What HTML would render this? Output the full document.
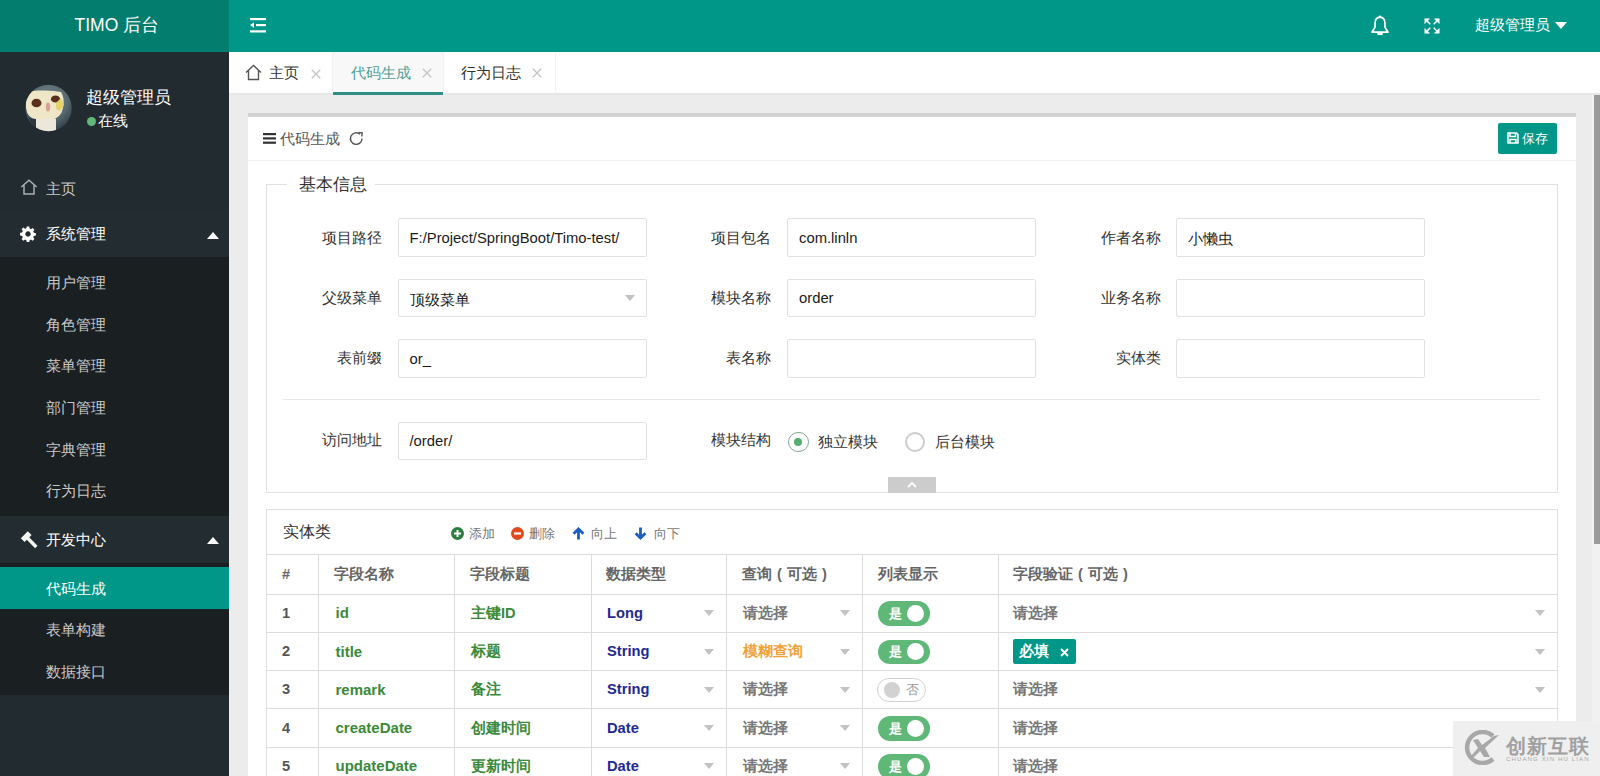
<!DOCTYPE html>
<html><head><meta charset="utf-8">
<style>
*{margin:0;padding:0;box-sizing:border-box}
html,body{width:1600px;height:776px;overflow:hidden;background:#ececec;font-family:"Liberation Sans",sans-serif;color:#333}
.a{position:absolute}
.t{position:absolute;white-space:nowrap;line-height:1}
/* header */
#logo{left:0;top:0;width:229px;height:52px;background:#037d6e}
#topbar{left:229px;top:0;width:1371px;height:52px;background:#009688}
/* sidebar */
#side{left:0;top:52px;width:229px;height:724px;background:#222b30}
.row{position:absolute;left:0;width:229px}
.sub{background:#1a1f22}
.mi{position:absolute;left:46px;font-size:15px;color:#c8c8c8;white-space:nowrap;line-height:1}
/* tabs */
#tabs{left:229px;top:52px;width:1371px;height:42px;background:#fff}
/* card */
#card{left:248px;top:113px;width:1328px;height:700px;background:#fff;border-top:4px solid #d2d2d2}
.lbl{position:absolute;margin-top:-1px;font-size:15px;color:#333;white-space:nowrap;line-height:1;text-align:right}
.inp{position:absolute;width:249px;height:38.5px;border:1px solid #e2e2e2;background:#fff;border-radius:2px}
.inp span{position:absolute;left:11px;top:11.5px;font-size:14.8px;color:#1a1a1a;white-space:nowrap;line-height:1}
.caret{position:absolute;width:0;height:0;border-left:5.5px solid transparent;border-right:5.5px solid transparent;border-top:6px solid #c2c2c2}
.vl{position:absolute;top:554px;width:1px;height:230px;background:#dcdcdc}
.hl{position:absolute;left:266px;width:1292px;height:1px;background:#dcdcdc}
.cell{position:absolute;font-size:14.6px;font-weight:bold;white-space:nowrap;line-height:1}
.g{color:#3a8a3a}
.b{color:#1f2a90}
.gr{color:#777}
.sw{position:absolute;left:877.5px;width:52px;height:24.5px;border-radius:12.25px;background:#5fb878}
.sw i{position:absolute;right:5.5px;top:3.75px;width:17px;height:17px;border-radius:50%;background:#fff}
.sw b{position:absolute;left:11px;top:5.5px;font-size:13px;color:#fff;font-weight:bold;line-height:1}
</style></head><body>
<!-- HEADER -->
<div id="logo" class="a"></div>
<div class="t" style="left:74.5px;top:17px;font-size:17.5px;color:#fff">TIMO 后台</div>
<div id="topbar" class="a"></div>
<svg class="a" style="left:249px;top:17px" width="18" height="17" viewBox="0 0 18 17">
 <rect x="1" y="1" width="16" height="2.2" fill="#fff"/>
 <rect x="7" y="7" width="10" height="2.2" fill="#fff"/>
 <rect x="1" y="13.3" width="16" height="2.2" fill="#fff"/>
 <path d="M1 8.1 L5 5.3 L5 10.9Z" fill="#fff"/>
</svg>
<!-- bell -->
<svg class="a" style="left:1370px;top:14px" width="20" height="22" viewBox="0 0 20 22">
 <path d="M10 3.2 C6.2 3.4 5 6.5 5 9.5 L5 13.2 L2 18.2 L18 18.2 L15 13.2 L15 9.5 C15 6.5 13.8 3.4 10 3.2Z" fill="none" stroke="#fff" stroke-width="1.7" stroke-linejoin="round"/>
 <circle cx="10" cy="2.6" r="1.2" fill="#fff"/>
 <rect x="7.2" y="18.5" width="5.6" height="2.6" rx="1" fill="#fff"/>
</svg>
<!-- fullscreen -->
<svg class="a" style="left:1424px;top:18px" width="16" height="16" viewBox="0 0 16 16" fill="#fff" stroke="#fff" stroke-width="1.5">
 <path d="M2 2 L6.3 6.3 M14 2 L9.7 6.3 M2 14 L6.3 9.7 M14 14 L9.7 9.7" fill="none"/>
 <path d="M0.8 0.8 L5.5 0.8 L0.8 5.5Z M15.2 0.8 L10.5 0.8 L15.2 5.5Z M0.8 15.2 L5.5 15.2 L0.8 10.5Z M15.2 15.2 L10.5 15.2 L15.2 10.5Z" stroke-width="0.6"/>
</svg>
<div class="t" style="left:1475px;top:17px;font-size:15px;color:#fff">超级管理员</div>
<div class="caret" style="left:1554.5px;top:22px;border-top-color:#fff;border-left-width:6.3px;border-right-width:6.3px;border-top-width:7px"></div>

<!-- SIDEBAR -->
<div id="side" class="a"></div>
<!-- avatar -->
<svg class="a" style="left:25px;top:82px" width="47" height="52" viewBox="0 0 47 52">
 <defs><radialGradient id="av" cx="0.5" cy="0.35" r="0.6"><stop offset="0" stop-color="#7d8d94"/><stop offset="0.7" stop-color="#56676f"/><stop offset="1" stop-color="#3a4850"/></radialGradient>
 <clipPath id="avc"><circle cx="23.5" cy="26" r="23.2"/></clipPath></defs>
 <circle cx="23.5" cy="26" r="23.2" fill="url(#av)"/>
 <g clip-path="url(#avc)">
 <path d="M1 15 Q3 8 14 8.5 Q28 8 36 10 Q40 16 38 26 Q36 36 26 38 L12 38 Q2 36 1 26Z" fill="#efe6c8"/>
 <rect x="11" y="37" width="20" height="14" fill="#ece7dc"/>
 <ellipse cx="11.5" cy="21" rx="5" ry="4.3" fill="#5b2f1d"/>
 <ellipse cx="30.5" cy="17" rx="4.6" ry="3.6" fill="#5b2f1d"/>
 <ellipse cx="23" cy="25" rx="2.2" ry="4.5" fill="#d9a095"/>
 <path d="M31 21 L36 16 L39 23 L35 29 L31 27Z" fill="#e6d26a"/>
 <path d="M4 36 Q7 44 11 45 L11 37Z" fill="#2d383e"/>
 </g>
</svg>
<div class="t" style="left:86px;top:89px;font-size:17px;color:#fff">超级管理员</div>
<div class="a" style="left:87px;top:116.5px;width:9px;height:9px;border-radius:50%;background:#5fb878"></div>
<div class="t" style="left:98px;top:113px;font-size:15px;color:#fff">在线</div>

<!-- menu -->
<svg class="a" style="left:20px;top:179px" width="18" height="17" viewBox="0 0 18 17" fill="none" stroke="#a8b0b3" stroke-width="1.5"><path d="M1.3 8 L9 1.2 L16.7 8 M4 6.2 L4 15 L14 15 L14 6.2"/></svg>
<div class="mi" style="top:181px">主页</div>

<div class="row" style="top:210px;height:47px;background:#232c31"></div>
<svg class="a" style="left:20px;top:226px" width="16" height="16" viewBox="0 0 16 16"><path fill="#fff" fill-rule="evenodd" d="M6.8 0.5h2.4l0.4 2.1 1.3 0.6 1.8-1.2 1.7 1.7-1.2 1.8 0.6 1.3 2.1 0.4v2.4l-2.1 0.4-0.6 1.3 1.2 1.8-1.7 1.7-1.8-1.2-1.3 0.6-0.4 2.1H6.8l-0.4-2.1-1.3-0.6-1.8 1.2-1.7-1.7 1.2-1.8-0.6-1.3-2.1-0.4V6.8l2.1-0.4 0.6-1.3-1.2-1.8 1.7-1.7 1.8 1.2 1.3-0.6z M8 5.3a2.7 2.7 0 1 0 0.01 0z"/></svg>
<div class="mi" style="top:226px;color:#fff">系统管理</div>
<div class="caret" style="left:207px;top:231.5px;border-top:0;border-bottom:7px solid #fff;border-left-width:6.5px;border-right-width:6.5px"></div>

<div class="row sub" style="top:257px;height:259px"></div>
<div class="mi" style="top:275px">用户管理</div>
<div class="mi" style="top:317px">角色管理</div>
<div class="mi" style="top:358px">菜单管理</div>
<div class="mi" style="top:400px">部门管理</div>
<div class="mi" style="top:442px">字典管理</div>
<div class="mi" style="top:483px">行为日志</div>

<div class="row" style="top:516px;height:47px;background:#232c31"></div>
<svg class="a" style="left:20px;top:530px" width="18" height="19" viewBox="0 0 18 19"><path fill="#f4f4f0" d="M0.8 8.3 L7.8 1.3 L11.6 5.1 L4.6 12.1Z"/><path d="M7.5 8 L16.3 17" stroke="#f4f4f0" stroke-width="3.4"/></svg>
<div class="mi" style="top:532px;color:#fff">开发中心</div>
<div class="caret" style="left:207px;top:537px;border-top:0;border-bottom:7px solid #fff;border-left-width:6.5px;border-right-width:6.5px"></div>

<div class="row sub" style="top:563px;height:132px"></div>
<div class="row" style="top:566.5px;height:42px;background:#009688"></div>
<div class="mi" style="top:581px;color:#fff">代码生成</div>
<div class="mi" style="top:622px">表单构建</div>
<div class="mi" style="top:664px">数据接口</div>

<!-- TABS -->
<div id="tabs" class="a"></div>
<div class="a" style="left:229px;top:93px;width:1371px;height:2px;background:#e6e6e6"></div>
<div class="a" style="left:333px;top:52px;width:110px;height:42px;background:#f8f8f8"></div>
<div class="a" style="left:333px;top:91.5px;width:110px;height:3px;background:#2f8f87"></div>
<div class="a" style="left:332px;top:52px;width:1px;height:42px;background:#f2f2f2"></div>
<div class="a" style="left:443px;top:52px;width:1px;height:42px;background:#f2f2f2"></div>
<div class="a" style="left:555px;top:52px;width:1px;height:42px;background:#f2f2f2"></div>
<svg class="a" style="left:245px;top:64px" width="17" height="17" viewBox="0 0 17 17" fill="none" stroke="#555" stroke-width="1.4"><path d="M1 8.5 L8.5 1.5 L16 8.5 M3.5 6.5 L3.5 15.5 L13.5 15.5 L13.5 6.5"/></svg>
<div class="t" style="left:269px;top:65px;font-size:15px;color:#333">主页</div>
<svg class="a" style="left:311px;top:68.5px" width="10" height="10" viewBox="0 0 10 10" stroke="#c4c4c4" stroke-width="1.3"><path d="M0.8 0.8 L9.2 9.2 M9.2 0.8 L0.8 9.2"/></svg>
<div class="t" style="left:351px;top:65px;font-size:15px;color:#50a096">代码生成</div>
<svg class="a" style="left:422px;top:68px" width="10" height="10" viewBox="0 0 10 10" stroke="#c4c4c4" stroke-width="1.3"><path d="M0.8 0.8 L9.2 9.2 M9.2 0.8 L0.8 9.2"/></svg>
<div class="t" style="left:461px;top:65px;font-size:15px;color:#333">行为日志</div>
<svg class="a" style="left:532px;top:68px" width="10" height="10" viewBox="0 0 10 10" stroke="#c4c4c4" stroke-width="1.3"><path d="M0.8 0.8 L9.2 9.2 M9.2 0.8 L0.8 9.2"/></svg>

<!-- CARD -->
<div id="card" class="a"></div>
<div class="a" style="left:248px;top:159.5px;width:1328px;height:1px;background:#f0f0f0"></div>
<svg class="a" style="left:263px;top:133px" width="13" height="11" viewBox="0 0 13 11" fill="#333"><rect y="0" width="13" height="2.2"/><rect y="4.3" width="13" height="2.2"/><rect y="8.6" width="13" height="2.2"/></svg>
<div class="t" style="left:280px;top:130.5px;font-size:15px;color:#555">代码生成</div>
<svg class="a" style="left:348px;top:130px" width="17" height="17" viewBox="0 0 17 17" fill="none" stroke="#555" stroke-width="1.4"><path d="M14 8.5 A5.8 5.8 0 1 1 12 4.2"/><path d="M10.5 2.5 L14.2 2.8 L13.8 6.5" /></svg>
<div class="a" style="left:1498px;top:123px;width:59px;height:31px;background:#009688;border-radius:2px"></div>
<svg class="a" style="left:1507px;top:132px" width="12" height="12" viewBox="0 0 12 12" fill="none" stroke="#fff" stroke-width="1.5"><path d="M1 1 H9.5 L11 2.5 V11 H1Z M3 1 V4.5 H8.5 V1 M3 11 V7.5 H9 V11"/></svg>
<div class="t" style="left:1522px;top:132.5px;font-size:12.5px;color:#fff">保存</div>

<!-- fieldset -->
<div class="a" style="left:266px;top:184px;width:1292px;height:309px;border:1px solid #e2e2e2"></div>
<div class="a" style="left:287px;top:180px;width:88px;height:8px;background:#fff"></div>
<div class="t" style="left:299px;top:176.5px;font-size:16.8px;color:#333">基本信息</div>

<div class="lbl" style="left:322px;top:230.5px">项目路径</div>
<div class="inp" style="left:397.5px;top:218px"><span>F:/Project/SpringBoot/Timo-test/</span></div>
<div class="lbl" style="left:711px;top:230.5px">项目包名</div>
<div class="inp" style="left:787px;top:218px"><span>com.linln</span></div>
<div class="lbl" style="left:1101px;top:230.5px">作者名称</div>
<div class="inp" style="left:1176px;top:218px"><span style="top:12px;font-size:15px">小懒虫</span></div>

<div class="lbl" style="left:322px;top:291px">父级菜单</div>
<div class="inp" style="left:397.5px;top:278.5px"><span style="font-size:15px;top:12px">顶级菜单</span></div>
<div class="caret" style="left:625px;top:295px"></div>
<div class="lbl" style="left:711px;top:291px">模块名称</div>
<div class="inp" style="left:787px;top:278.5px"><span>order</span></div>
<div class="lbl" style="left:1101px;top:291px">业务名称</div>
<div class="inp" style="left:1176px;top:278.5px"></div>

<div class="lbl" style="left:337px;top:351px">表前缀</div>
<div class="inp" style="left:397.5px;top:339px"><span>or_</span></div>
<div class="lbl" style="left:726px;top:351px">表名称</div>
<div class="inp" style="left:787px;top:339px"></div>
<div class="lbl" style="left:1116px;top:351px">实体类</div>
<div class="inp" style="left:1176px;top:339px"></div>

<div class="a" style="left:283px;top:399px;width:1257px;height:1px;background:#e6e6e6"></div>

<div class="lbl" style="left:322px;top:433px">访问地址</div>
<div class="inp" style="left:397.5px;top:421.5px"><span>/order/</span></div>
<div class="lbl" style="left:711px;top:433px">模块结构</div>
<div class="a" style="left:788px;top:431.5px;width:20.5px;height:20.5px;border-radius:50%;border:1.7px solid #8aa592"></div>
<div class="a" style="left:794.2px;top:437.7px;width:8px;height:8px;border-radius:50%;background:#55b070"></div>
<div class="t" style="left:818px;top:434px;font-size:15px;color:#333">独立模块</div>
<div class="a" style="left:904.5px;top:431.5px;width:20.5px;height:20.5px;border-radius:50%;border:2px solid #cccccc"></div>
<div class="t" style="left:935px;top:434px;font-size:15px;color:#333">后台模块</div>
<div class="a" style="left:888px;top:477px;width:48px;height:15.5px;background:#cccccc"></div>
<svg class="a" style="left:906px;top:480.5px" width="12" height="7" viewBox="0 0 12 7" fill="none" stroke="#fff" stroke-width="2"><path d="M2 6 L6 2 L10 6"/></svg>

<!-- table panel -->
<div class="a" style="left:266px;top:509px;width:1292px;height:300px;border:1px solid #e2e2e2"></div>
<div class="t" style="left:282.5px;top:524px;font-size:15.5px;color:#333">实体类</div>
<svg class="a" style="left:451px;top:527px" width="13" height="13" viewBox="0 0 13 13"><circle cx="6.5" cy="6.5" r="6.5" fill="#2b7f3c"/><path d="M6.5 3 V10 M3 6.5 H10" stroke="#fff" stroke-width="2"/></svg>
<div class="t" style="left:469px;top:527.5px;font-size:12.5px;color:#777">添加</div>
<svg class="a" style="left:511px;top:527px" width="13" height="13" viewBox="0 0 13 13"><circle cx="6.5" cy="6.5" r="6.5" fill="#e04b1e"/><path d="M3 6.5 H10" stroke="#fff" stroke-width="2.2"/></svg>
<div class="t" style="left:529px;top:527.5px;font-size:12.5px;color:#777">删除</div>
<svg class="a" style="left:571.5px;top:527px" width="13" height="13" viewBox="0 0 13 13" fill="none" stroke="#1b5fc0" stroke-width="2.8" stroke-linejoin="miter"><path d="M6.5 12.5 V3 M1.6 6.8 L6.5 2 L11.4 6.8"/></svg>
<div class="t" style="left:591px;top:527.5px;font-size:12.5px;color:#777">向上</div>
<svg class="a" style="left:633.5px;top:526.5px" width="13" height="13" viewBox="0 0 13 13" fill="none" stroke="#1b5fc0" stroke-width="2.8" stroke-linejoin="miter"><path d="M6.5 0.5 V10 M1.6 6.2 L6.5 11 L11.4 6.2"/></svg>
<div class="t" style="left:654px;top:527.5px;font-size:12.5px;color:#777">向下</div>

<!-- table grid -->
<div class="hl" style="top:554px"></div>
<div class="hl" style="top:593.5px"></div>
<div class="hl" style="top:631.5px"></div>
<div class="hl" style="top:669.8px"></div>
<div class="hl" style="top:708.3px"></div>
<div class="hl" style="top:746.5px"></div>
<div class="vl" style="left:318px"></div>
<div class="vl" style="left:453.8px"></div>
<div class="vl" style="left:590.5px"></div>
<div class="vl" style="left:725.8px"></div>
<div class="vl" style="left:862px"></div>
<div class="vl" style="left:997.5px"></div>

<div class="cell gr" style="left:282px;top:567px;color:#666">#</div>
<div class="cell" style="left:334px;top:567px;color:#666">字段名称</div>
<div class="cell" style="left:470px;top:567px;color:#666">字段标题</div>
<div class="cell" style="left:606px;top:567px;color:#666">数据类型</div>
<div class="cell" style="left:742px;top:567px;color:#666">查询<span style="display:inline-block;width:15px;text-align:center">(</span>可选<span style="display:inline-block;width:15px;text-align:center">)</span></div>
<div class="cell" style="left:878px;top:567px;color:#666">列表显示</div>
<div class="cell" style="left:1013px;top:567px;color:#666">字段验证<span style="display:inline-block;width:15px;text-align:center">(</span>可选<span style="display:inline-block;width:15px;text-align:center">)</span></div>
<div class="cell" style="left:282px;top:605.7px;color:#555">1</div>
<div class="cell g" style="left:335.5px;top:605.2px;font-size:15px">id</div>
<div class="cell g" style="left:471px;top:605.7px">主键ID</div>
<div class="cell b" style="left:607px;top:605.7px;font-size:14.7px">Long</div>
<div class="caret" style="left:704px;top:610.2px"></div>
<div class="cell" style="left:742.5px;top:605.7px;color:#777">请选择</div>
<div class="caret" style="left:840px;top:610.2px"></div>
<div class="sw" style="top:601.2px"><b>是</b><i></i></div>
<div class="cell" style="left:1013px;top:605.7px;color:#777">请选择</div>
<div class="caret" style="left:1534.5px;top:610.2px"></div>
<div class="cell" style="left:282px;top:644.2px;color:#555">2</div>
<div class="cell g" style="left:335.5px;top:643.7px;font-size:15px">title</div>
<div class="cell g" style="left:471px;top:644.2px">标题</div>
<div class="cell b" style="left:607px;top:644.2px;font-size:14.7px">String</div>
<div class="caret" style="left:704px;top:648.7px"></div>
<div class="cell" style="left:742.5px;top:644.2px;color:#f0a23a">模糊查询</div>
<div class="caret" style="left:840px;top:648.7px"></div>
<div class="sw" style="top:639.7px"><b>是</b><i></i></div>
<div class="a" style="left:1013px;top:639.2px;width:63px;height:25px;background:#009688;border-radius:2px"></div>
<div class="t" style="left:1019px;top:644.2px;font-size:14.6px;font-weight:bold;color:#fff">必填</div>
<svg class="a" style="left:1059.5px;top:647.5px" width="9" height="9" viewBox="0 0 9 9" stroke="#fff" stroke-width="1.9"><path d="M1 1 L8 8 M8 1 L1 8"/></svg>
<div class="caret" style="left:1534.5px;top:648.7px"></div>
<div class="cell" style="left:282px;top:682.2px;color:#555">3</div>
<div class="cell g" style="left:335.5px;top:681.7px;font-size:15px">remark</div>
<div class="cell g" style="left:471px;top:682.2px">备注</div>
<div class="cell b" style="left:607px;top:682.2px;font-size:14.7px">String</div>
<div class="caret" style="left:704px;top:686.7px"></div>
<div class="cell" style="left:742.5px;top:682.2px;color:#777">请选择</div>
<div class="caret" style="left:840px;top:686.7px"></div>
<div class="a" style="left:877px;top:677.7px;width:49px;height:24px;border-radius:12px;border:1px solid #d2d2d2;background:#fff"><div class="a" style="left:6px;top:3px;width:16px;height:16px;border-radius:50%;background:#d2d2d2"></div><div class="t" style="left:28px;top:5px;font-size:12.5px;color:#999">否</div></div>
<div class="cell" style="left:1013px;top:682.2px;color:#777">请选择</div>
<div class="caret" style="left:1534.5px;top:686.7px"></div>
<div class="cell" style="left:282px;top:720.7px;color:#555">4</div>
<div class="cell g" style="left:335.5px;top:720.2px;font-size:15px">createDate</div>
<div class="cell g" style="left:471px;top:720.7px">创建时间</div>
<div class="cell b" style="left:607px;top:720.7px;font-size:14.7px">Date</div>
<div class="caret" style="left:704px;top:725.2px"></div>
<div class="cell" style="left:742.5px;top:720.7px;color:#777">请选择</div>
<div class="caret" style="left:840px;top:725.2px"></div>
<div class="sw" style="top:716.2px"><b>是</b><i></i></div>
<div class="cell" style="left:1013px;top:720.7px;color:#777">请选择</div>
<div class="caret" style="left:1534.5px;top:725.2px"></div>
<div class="cell" style="left:282px;top:758.7px;color:#555">5</div>
<div class="cell g" style="left:335.5px;top:758.2px;font-size:15px">updateDate</div>
<div class="cell g" style="left:471px;top:758.7px">更新时间</div>
<div class="cell b" style="left:607px;top:758.7px;font-size:14.7px">Date</div>
<div class="caret" style="left:704px;top:763.2px"></div>
<div class="cell" style="left:742.5px;top:758.7px;color:#777">请选择</div>
<div class="caret" style="left:840px;top:763.2px"></div>
<div class="sw" style="top:754.2px"><b>是</b><i></i></div>
<div class="cell" style="left:1013px;top:758.7px;color:#777">请选择</div>
<div class="caret" style="left:1534.5px;top:763.2px"></div>
<!-- scrollbar -->
<div class="a" style="left:1592px;top:95px;width:8px;height:681px;background:#f1f1f1"></div>
<div class="a" style="left:1594px;top:95px;width:6px;height:449px;background:#9a9a9a"></div>
<!-- watermark -->
<div class="a" style="left:1453px;top:721px;width:147px;height:55px;background:#efefef"></div>
<svg class="a" style="left:1464px;top:730px" width="36" height="35" viewBox="0 0 36 35"><path d="M29 6 A15.5 15.5 0 1 0 29 29" fill="none" stroke="#a8a8a8" stroke-width="4.5"/><path d="M9 10 L14 9 L18 15 L30 6 L35 5 L21 18 L26 27 L20 27 L16 21 L10 27 L7 26 L14 18Z" fill="#a8a8a8"/></svg>
<div class="t" style="left:1506px;top:735.5px;font-size:20px;letter-spacing:1px;font-weight:bold;color:#a0a0a0">创新互联</div>
<div class="t" style="left:1506px;top:756px;font-size:6px;color:#a8a8a8;letter-spacing:1.15px">CHUANG XIN HU LIAN</div>

</body></html>
